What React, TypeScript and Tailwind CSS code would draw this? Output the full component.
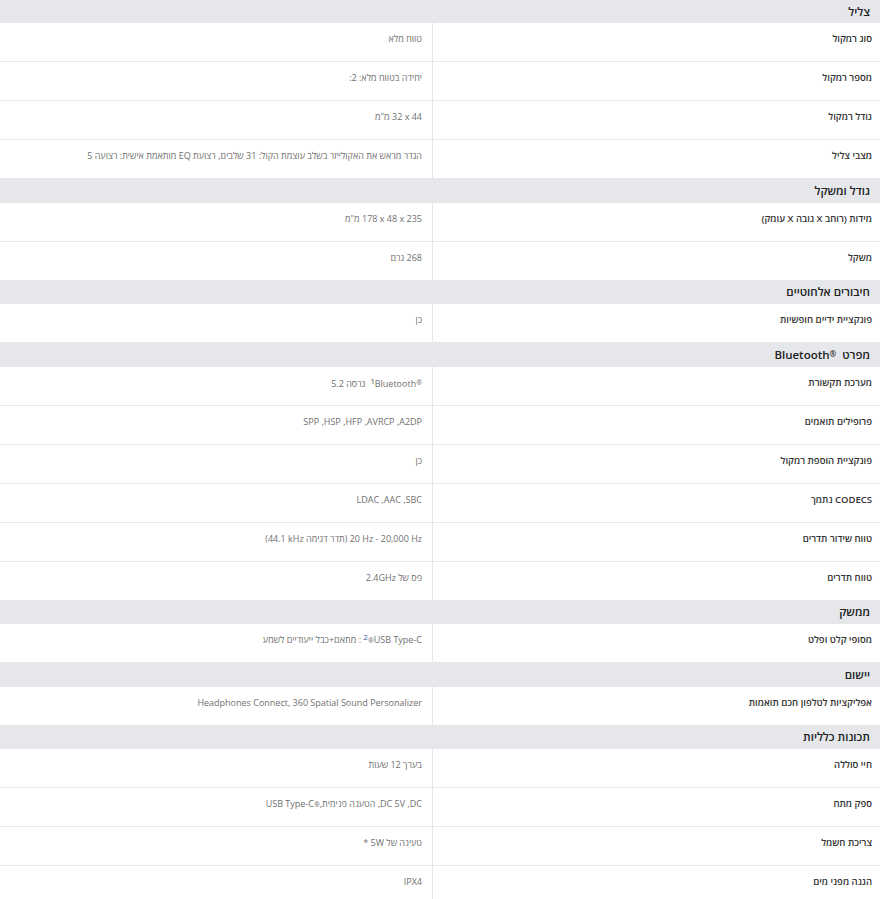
import type { ReactNode } from "react";

type Row = { label: ReactNode; value: ReactNode };
type Section = { title: ReactNode; rows: Row[] };

const RLM = "\u200F";

const sections: Section[] = [
  {
    title: "צליל",
    rows: [
      { label: "סוג רמקול", value: "טווח מלא" },
      { label: "מספר רמקול", value: "יחידה בטווח מלא: 2:" },
      {
        label: "גודל רמקול",
        value: (
          <>
            <bdi>44</bdi> <bdi>x</bdi> <bdi>32</bdi> מ"מ
          </>
        ),
      },
      {
        label: "מצבי צליל",
        value:
          "הגדר מראש את האקולייזר בשלב עוצמת הקול: 31 שלבים, רצועת EQ מותאמת אישית: רצועה 5",
      },
    ],
  },
  {
    title: "גודל ומשקל",
    rows: [
      {
        label: "מידות (רוחב X גובה X עומק)",
        value: (
          <>
            <bdi>235</bdi> <bdi>x</bdi> <bdi>48</bdi> <bdi>x</bdi> <bdi>178</bdi> מ"מ
          </>
        ),
      },
      { label: "משקל", value: "268 גרם" },
    ],
  },
  {
    title: "חיבורים אלחוטיים",
    rows: [{ label: "פונקציית ידיים חופשיות", value: "כן" }],
  },
  {
    title: (
      <>
        מפרט{" "}
        <bdi className="mr-[3px]">
          Bluetooth<span className="text-[8px] align-[2px]">®</span>
        </bdi>
      </>
    ),
    rows: [
      {
        label: "מערכת תקשורת",
        value: (
          <>
            <bdi>
              Bluetooth<span className="text-[7px] align-[2px]">®</span>
            </bdi>
            <sup className="text-[7px] top-[-3px] text-[#333]">1</sup>
            {"  "}
            <span className="mr-[3px]">גרסה 5.2</span>
          </>
        ),
      },
      {
        label: "פרופילים תואמים",
        value: `A2DP,${RLM} AVRCP,${RLM} HFP,${RLM} HSP,${RLM} SPP`,
      },
      { label: "פונקציית הוספת רמקול", value: "כן" },
      { label: "CODECS נתמך", value: `SBC,${RLM} AAC,${RLM} LDAC` },
      {
        label: "טווח שידור תדרים",
        value: (
          <>
            <bdi>20 Hz - 20,000 Hz</bdi> (תדר דגימה <bdi>44.1 kHz</bdi>)
          </>
        ),
      },
      { label: "טווח תדרים", value: "פס של 2.4GHz" },
    ],
  },
  {
    title: "ממשק",
    rows: [
      {
        label: "מסופי קלט ופלט",
        value: (
          <>
            <bdi>USB Type-C</bdi>
            <span className="text-[7px]">®</span>
            <sup className="text-[8px] top-[-3px] text-[#3b5b9a]">2</sup> : מתאם+כבל ייעודיים לשמע
          </>
        ),
      },
    ],
  },
  {
    title: "יישום",
    rows: [
      {
        label: "אפליקציות לטלפון חכם תואמות",
        value: "Headphones Connect, 360 Spatial Sound Personalizer",
      },
    ],
  },
  {
    title: "תכונות כלליות",
    rows: [
      { label: "חיי סוללה", value: "בערך 12 שעות" },
      {
        label: "ספק מתח",
        value: (
          <>
            DC,{RLM} DC 5V, הטענה פנימית,
            <bdi>
              USB Type-C<span className="text-[7px]">®</span>
            </bdi>
          </>
        ),
      },
      { label: "צריכת חשמל", value: "טעינה של 5W *" },
      { label: "הגנה מפני מים", value: "IPX4" },
    ],
  },
];

export default function App() {
  return (
    <div
      dir="rtl"
      className="w-[880px] bg-white font-['Open_Sans','Noto_Sans','Liberation_Sans',sans-serif]"
    >
      {sections.map((section, si) => (
        <div key={si}>
          <div
            className={`${si === 0 ? "h-[23px]" : "h-[24.5px]"} bg-[#e5e7eb] pr-[10px] flex items-center text-[11.5px] font-semibold text-[#222]`}
          >
            <span>{section.title}</span>
          </div>
          {section.rows.map((row, ri) => (
            <div
              key={ri}
              className={`flex ${ri < section.rows.length - 1 ? "h-[39px] border-b border-[#e6e6e6]" : "h-[38px]"}`}
            >
              <div className="w-[448px] shrink-0 border-l border-[#e6e6e6] pr-[8px] pt-[8px] text-[9.5px] leading-[15px] font-semibold text-[#333]">
                {row.label}
              </div>
              <div className="flex-1 pr-[10px] pt-[8px] text-[9px] leading-[15px] text-[#707070]">
                {row.value}
              </div>
            </div>
          ))}
        </div>
      ))}
    </div>
  );
}
